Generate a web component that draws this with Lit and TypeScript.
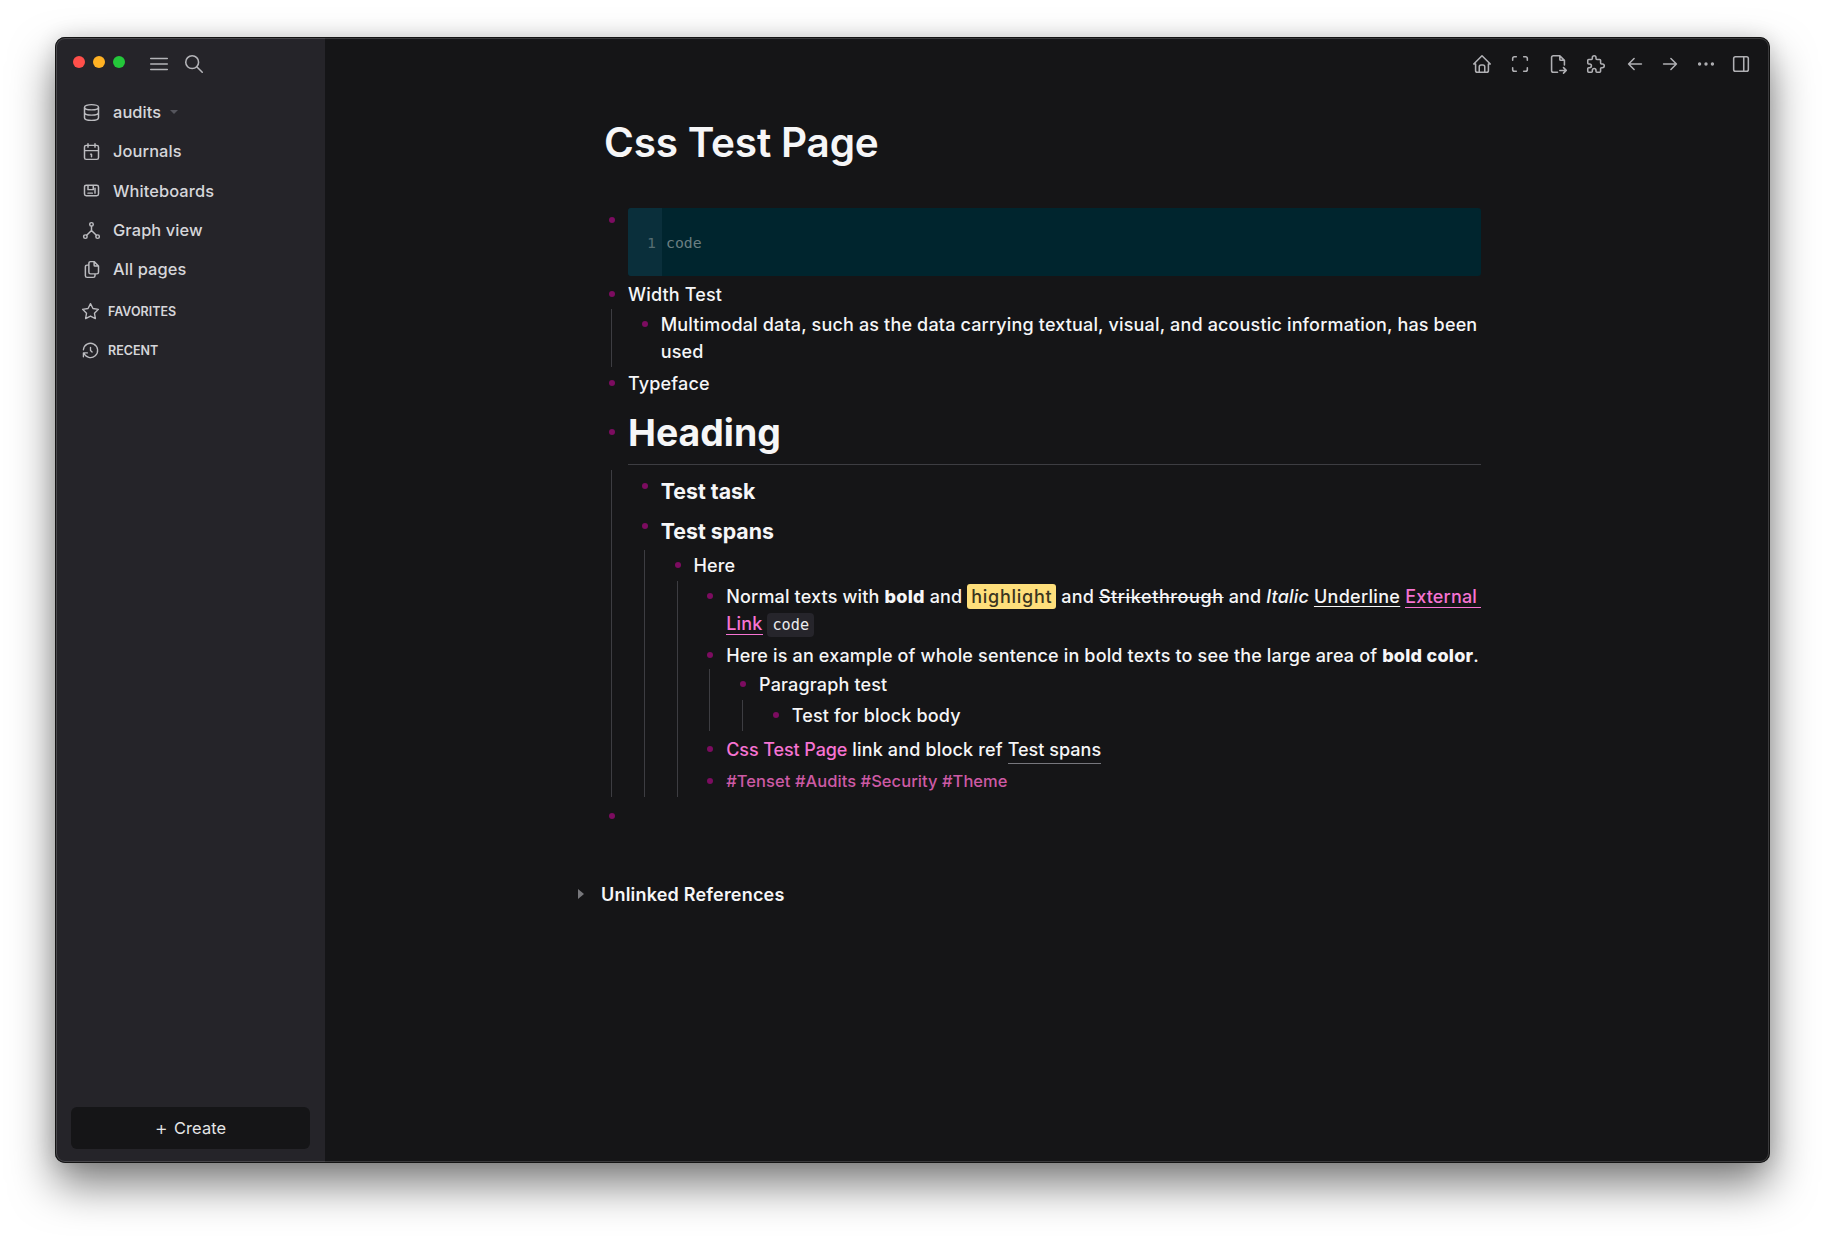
import { LitElement, html, css, svg } from 'lit'
import { customElement } from 'lit/decorators.js'

const icon = (body: unknown, size = 20) => html`<svg class="ico" width=${size} height=${size} viewBox="0 0 24 24" fill="none" stroke="currentColor" stroke-width="1.7" stroke-linecap="round" stroke-linejoin="round">${body}</svg>`

const icons = {
  menu: svg`<path d="M3 6h18M3 12h18M3 18h18"/>`,
  search: svg`<circle cx="10" cy="10" r="7"/><path d="M21 21l-6-6"/>`,
  database: svg`<path d="M12 6m-8 0a8 3 0 1 0 16 0a8 3 0 1 0-16 0M4 6v6a8 3 0 0 0 16 0V6M4 12v6a8 3 0 0 0 16 0v-6"/>`,
  calendar: svg`<path d="M4 7a2 2 0 0 1 2-2h12a2 2 0 0 1 2 2v12a2 2 0 0 1-2 2H6a2 2 0 0 1-2-2zM16 3v4M8 3v4M4 11h16M11 15h1M12 15v3"/>`,
  board: svg`<path d="M4 8a2 2 0 0 1 2-2h12a2 2 0 0 1 2 2v8a2 2 0 0 1-2 2H6a2 2 0 0 1-2-2zM8 6v5h6V6M16 9.500v5.500M8 15h5"/>`,
  graph: svg`<circle cx="12" cy="5" r="2"/><circle cx="5" cy="19" r="2"/><circle cx="19" cy="19" r="2"/><path d="M12 7v5M12 12l-5.500 5.500M12 12l5.500 5.500"/>`,
  pages: svg`<path d="M15 3v4a1 1 0 0 0 1 1h4M18 17h-7a2 2 0 0 1-2-2V5a2 2 0 0 1 2-2h4l5 5v7a2 2 0 0 1-2 2zM16 17v2a2 2 0 0 1-2 2H7a2 2 0 0 1-2-2V9a2 2 0 0 1 2-2h2"/>`,
  star: svg`<path d="M12 17.750l-6.172 3.245l1.179-6.873l-5-4.867l6.900-1l3.086-6.253l3.086 6.253l6.900 1l-5 4.867l1.179 6.873z"/>`,
  history: svg`<path d="M12 8v4l2 2M3.050 11a9 9 0 1 1 .5 4m-.5 5v-5h5"/>`,
  home: svg`<path d="M5 12H3l9-9l9 9h-2M5 12v7a2 2 0 0 0 2 2h10a2 2 0 0 0 2-2v-7M9 21v-6a2 2 0 0 1 2-2h2a2 2 0 0 1 2 2v6"/>`,
  focus: svg`<path d="M4 8V6a2 2 0 0 1 2-2h2M4 16v2a2 2 0 0 0 2 2h2M16 4h2a2 2 0 0 1 2 2v2M16 20h2a2 2 0 0 0 2-2v-2"/>`,
  fileExport: svg`<path d="M14 3v4a1 1 0 0 0 1 1h4M11.500 21H7a2 2 0 0 1-2-2V5a2 2 0 0 1 2-2h7l5 5v5m-5 6h7m-3-3l3 3l-3 3"/>`,
  puzzle: svg`<path d="M4 7h3a1 1 0 0 0 1-1V5a2 2 0 0 1 4 0v1a1 1 0 0 0 1 1h3a1 1 0 0 1 1 1v3a1 1 0 0 0 1 1h1a2 2 0 0 1 0 4h-1a1 1 0 0 0-1 1v3a1 1 0 0 1-1 1h-3a1 1 0 0 1-1-1v-1a2 2 0 0 0-4 0v1a1 1 0 0 1-1 1H4a1 1 0 0 1-1-1v-3a1 1 0 0 1 1-1h1a2 2 0 0 0 0-4H4a1 1 0 0 1-1-1V8a1 1 0 0 1 1-1"/>`,
  left: svg`<path d="M5 12h14M5 12l6 6M5 12l6-6"/>`,
  right: svg`<path d="M5 12h14M13 18l6-6M13 6l6 6"/>`,
  dots: svg`<circle cx="5" cy="12" r="1"/><circle cx="12" cy="12" r="1"/><circle cx="19" cy="12" r="1"/>`,
  panel: svg`<rect x="4" y="4" width="16" height="16" rx="2"/><path d="M15 4v16"/>`,
}

const navItems = [
  { label: 'Journals', ic: icons.calendar },
  { label: 'Whiteboards', ic: icons.board },
  { label: 'Graph view', ic: icons.graph },
  { label: 'All pages', ic: icons.pages },
]

const toolbar = [icons.home, icons.focus, icons.fileExport, icons.puzzle, icons.left, icons.right, icons.dots, icons.panel]

@customElement('app-root')
class App extends LitElement {
  static styles = css`
    :host {
      display: block;
      width: 1825px;
      height: 1236px;
      background: #fff;
      font-family: Inter, 'Noto Sans', sans-serif;
      overflow: hidden;
    }
    .page {
      padding: 37px 55px 0;
    }
    .window {
      position: relative;
      height: 1126px;
      width: 1715px;
      display: flex;
      border-radius: 10px;
      background: #151517;
      overflow: hidden;
      box-shadow: 0 22px 44px rgba(0, 0, 0, 0.5), 0 0 20px rgba(0, 0, 0, 0.12);
    }
    .window::after {
      content: '';
      position: absolute;
      inset: 0;
      border-radius: 10px;
      pointer-events: none;
      box-shadow: inset 0 0 0 1px #141414, inset 0 0 0 2px rgba(255, 255, 255, 0.16);
    }
    .ico {
      display: block;
      flex: none;
    }

    /* sidebar */
    .side {
      width: 270px;
      flex: none;
      background: #252429;
      display: flex;
      flex-direction: column;
      color: #d6d6da;
      font-size: 16.4px;
      font-weight: 500;
      letter-spacing: 0.1px;
    }
    .top {
      display: flex;
      align-items: center;
      height: 50px;
      padding: 0 0 0 18px;
      color: #b4b4b8;
    }
    .top .ico {
      margin-top: 4px;
    }
    .light {
      width: 12px;
      height: 12px;
      border-radius: 50%;
      margin-right: 8px;
    }
    .top .menu {
      margin-left: 15px;
      margin-right: 13px;
    }
    .nav {
      padding: 5.5px 0 0 27px;
    }
    .item {
      display: flex;
      align-items: center;
      height: 39.3px;
      color: #d6d6da;
    }
    .item .ico {
      width: 21px;
      height: 21px;
      color: #bcbcc0;
      margin-left: -1px;
      margin-right: 11px;
    }
    .caret {
      width: 0;
      height: 0;
      border: 4px solid transparent;
      border-top: 4px solid #55555c;
      border-bottom: 0;
      margin-left: 9px;
    }
    .sect {
      font-size: 12.5px;
      font-weight: 600;
      letter-spacing: 0;
      position: relative;
      top: 3px;
    }
    .item.sect .ico {
      width: 19px;
      height: 19px;
      margin-right: 8.5px;
      margin-left: -1.5px;
    }
    .grow {
      flex: 1;
    }
    .create {
      margin: 0 15px 14px 16px;
      height: 42px;
      background: #151517;
      border-radius: 6px;
      display: flex;
      align-items: center;
      justify-content: center;
      gap: 6px;
      color: #e6e6e8;
      font-size: 16.4px;
      font-weight: 400;
    }
    .plus {
      font-size: 20px;
      font-weight: 300;
      line-height: 1;
    }

    /* main */
    .main {
      flex: 1;
      display: flex;
      flex-direction: column;
      min-width: 0;
      color: #f6f6f7;
    }
    .tools {
      display: flex;
      justify-content: flex-end;
      align-items: center;
      height: 54px;
      padding-right: 11px;
      color: #b0b0b4;
    }
    .tool {
      width: 35.500px;
      display: flex;
      justify-content: center;
    }
    .tool:nth-child(-n+4) {
      margin-right: 2.800px;
    }
    .content {
      padding-left: 279px;
      width: 877px;
    }
    h1 {
      margin: 27px 0 0;
      font-size: 40.5px;
      line-height: 50px;
      font-weight: 600;
      letter-spacing: -0.2px;
    }
    .blocks {
      margin-top: 40px;
      font-size: 18px;
      font-weight: 500;
      line-height: 27px;
      letter-spacing: 0.16px;
    }
    .row {
      display: flex;
      padding-left: 24px;
      position: relative;
    }
    .row::before {
      content: '';
      position: absolute;
      left: 5px;
      top: 12px;
      width: 6px;
      height: 6px;
      border-radius: 50%;
      background: #7c0c60;
    }
    .kids {
      margin-left: 7px;
      padding-left: 24.750px;
      border-left: 1px solid #3d3d42;
    }
    .code {
      height: 68px;
      flex: 1;
      display: flex;
      background: #00252e;
      border-radius: 3px;
      overflow: hidden;
      font: 14.800px/70px 'DejaVu Sans Mono', monospace;
      letter-spacing: 0;
      color: #6b7f82;
    }
    .coderow::before {
      top: 9px;
    }
    .gutter {
      width: 34px;
      background: #0a2f3b;
      text-align: right;
      padding-right: 6px;
      box-sizing: border-box;
      color: #566d72;
      flex: none;
    }
    .code span:last-child {
      padding-left: 4px;
    }
    .t {
      padding-top: 2px;
      padding-bottom: 2px;
    }
    .first {
      margin-top: 3px;
      margin-bottom: -1px;
    }
    .tight {
      margin-bottom: -2px;
    }
    .gap1 {
      margin-top: 1px;
    }
    .gap3 {
      margin-top: 3px;
    }
    .gap4 {
      margin-top: 4px;
    }
    .h1row {
      font-size: 37.400px;
      font-weight: 700;
      line-height: 46px;
      letter-spacing: 0;
      padding-top: 11px;
    }
    .h1row::before {
      top: 30px;
    }
    .h1body {
      flex: 1;
      border-bottom: 1px solid #3d3d42;
      padding-bottom: 8px;
    }
    .sec {
      margin-top: 5px;
    }
    .h3row {
      font-size: 21.300px;
      font-weight: 700;
      line-height: 30px;
      letter-spacing: 0;
      padding-top: 6px;
      padding-bottom: 4px;
    }
    .h3row::before {
      top: 13px;
    }
    b {
      font-weight: 800;
      letter-spacing: 0.24px;
    }
    mark {
      background: #fedf7b;
      color: #3a3520;
      border-radius: 3px;
      padding: 2px 4px;
      letter-spacing: 0.72px;
    }
    s {
      text-decoration-thickness: 1px;
      letter-spacing: 0.6px;
    }
    u {
      text-underline-offset: 3px;
      letter-spacing: 0.3px;
    }
    .a {
      color: #f673d2;
      letter-spacing: -0.1px;
    }
    .ext {
      color: #f673d2;
      border-bottom: 1px solid #f673d2;
    }
    .ext.trail {
      padding-right: 4px;
      margin-right: -4px;
    }
    .ref {
      border-bottom: 1px solid #77777d;
      padding-bottom: 3px;
      letter-spacing: 0.02px;
    }
    code {
      font: 15.200px 'DejaVu Sans Mono', monospace;
      letter-spacing: 0;
      background: #26252b;
      border-radius: 4px;
      padding: 3px 5px;
      color: #ececee;
    }
    .tags {
      color: #cd5aa5;
      font-size: 16.500px;
      letter-spacing: 0.05px;
      margin-top: 0.5px;
    }
    .unlinked {
      display: flex;
      align-items: center;
      margin-top: 49px;
      margin-left: -25px;
      font-size: 18px;
      font-weight: 600;
      line-height: 27px;
      letter-spacing: 0.2px;
    }
    .tri {
      width: 0;
      height: 0;
      border: 5.500px solid transparent;
      border-left: 6px solid #77777b;
      border-right: 0;
      margin-left: -1px;
      margin-right: 17px;
    }
  `

  render() {
    return html`
      <div class="page">
        <div class="window">
          <aside class="side">
            <div class="top">
              <span class="light" style="background:#ff4f4a"></span>
              <span class="light" style="background:#ffb123"></span>
              <span class="light" style="background:#24c73a"></span>
              <span class="menu">${icon(icons.menu, 22)}</span>
              ${icon(icons.search, 22)}
            </div>
            <nav class="nav">
              <div class="item">${icon(icons.database)}<span>audits</span><span class="caret"></span></div>
              ${navItems.map(n => html`<div class="item">${icon(n.ic)}<span>${n.label}</span></div>`)}
              <div class="item sect">${icon(icons.star)}<span>FAVORITES</span></div>
              <div class="item sect">${icon(icons.history)}<span>RECENT</span></div>
            </nav>
            <div class="grow"></div>
            <div class="create"><span class="plus">+</span><span>Create</span></div>
          </aside>
          <main class="main">
            <div class="tools">
              ${toolbar.map(t => html`<span class="tool">${icon(t, 22)}</span>`)}
            </div>
            <div class="content">
              <h1>Css Test Page</h1>
              <div class="blocks">
                <div class="row coderow"><div class="code"><span class="gutter">1</span><span>code</span></div></div>
                <div class="row t first">Width Test</div>
                <div class="kids">
                  <div class="row t">Multimodal data, such as the data carrying textual, visual, and acoustic information, has been used</div>
                </div>
                <div class="row t gap1">Typeface</div>
                <div class="row h1row"><div class="h1body">Heading</div></div>
                <div class="kids sec">
                  <div class="row h3row">Test task</div>
                  <div class="row h3row">Test spans</div>
                  <div class="kids">
                    <div class="row t">Here</div>
                    <div class="kids">
                      <div class="row t"><div>Normal texts with <b>bold</b> and <mark>highlight</mark> and <s>Strikethrough</s> and <i>Italic</i> <u>Underline</u> <span class="ext trail">External</span> <span class="ext">Link</span> <code>code</code></div></div>
                      <div class="row t gap1 tight"><div>Here is an example of whole sentence in bold texts to see the large area of <b>bold color</b>.</div></div>
                      <div class="kids">
                        <div class="row t">Paragraph test</div>
                        <div class="kids"><div class="row t">Test for block body</div></div>
                      </div>
                      <div class="row t gap3"><div><span class="a">Css Test Page</span> link and block ref <span class="ref">Test spans</span></div></div>
                      <div class="row t tags">#Tenset #Audits #Security #Theme</div>
                    </div>
                  </div>
                </div>
                <div class="row t gap4">&nbsp;</div>
              </div>
              <div class="unlinked"><span class="tri"></span>Unlinked References</div>
            </div>
          </main>
        </div>
      </div>
    `
  }
}
export default App
